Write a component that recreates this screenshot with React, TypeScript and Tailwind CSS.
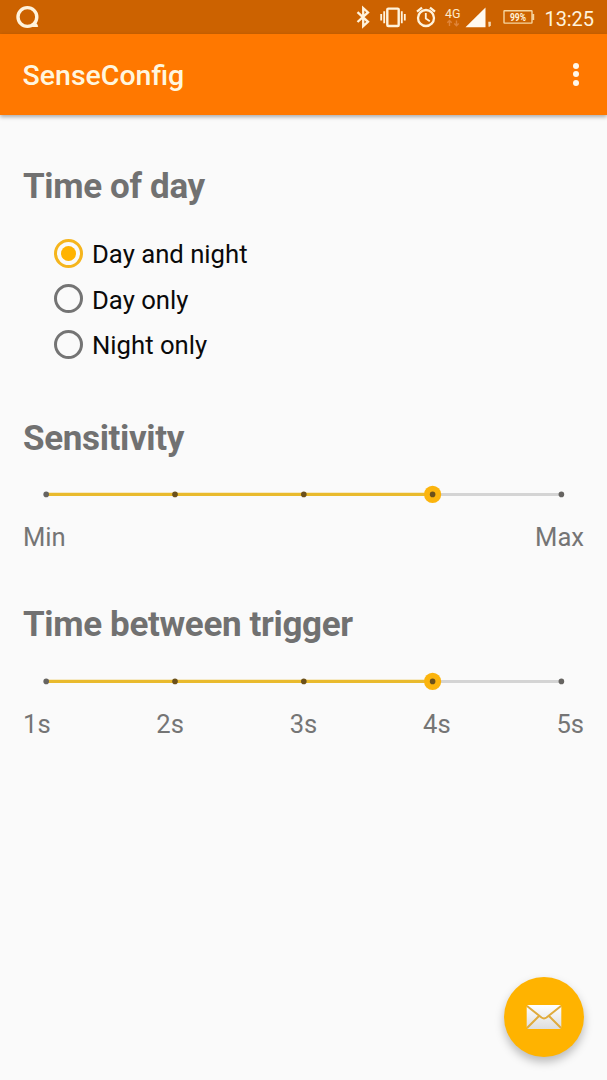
import React, { useState } from "react";

function StatusBar() {
  return (
    <div className="flex h-[34px] shrink-0 items-center bg-[#cc6200] text-[#fff3dc]">
      <svg className="ml-[15px] h-[24px] w-[25px]" viewBox="0 0 25 24" fill="none" stroke="currentColor">
        <circle cx="12.4" cy="12" r="9.4" strokeWidth="3.4" />
        <path d="M17.5 20.7h5" strokeWidth="2.6" />
        <path d="M20 17.5l2 3.4h-4z" fill="currentColor" strokeWidth="1.5" />
      </svg>
      <div className="flex-1" />
      <svg className="h-[34px] w-[195px] shrink-0" viewBox="350 0 195 34" fill="none" stroke="currentColor">
        <path d="M357.5 12.2l10.5 9.6-4.8 4.4V8l4.8 4.4-10.5 9.6" strokeWidth="2.3" />
        <rect x="387.3" y="8.6" width="11.4" height="17.4" rx="1" strokeWidth="2.4" />
        <path d="M384.2 11.2v12M381.2 14v6.5M401.8 11.2v12M404.8 14v6.5" strokeWidth="1.8" />
        <circle cx="426" cy="18" r="8" strokeWidth="2.3" />
        <path d="M425.8 13v5.5l4 2.8" strokeWidth="1.8" />
        <path d="M417 11.7l5-4.1M435 11.7l-5-4.1" strokeWidth="2.2" />
        <text x="445" y="18.2" fontSize="12" textLength="15.5" lengthAdjust="spacingAndGlyphs" fontFamily="Roboto, sans-serif" fill="#fdeacb" stroke="none">4G</text>
        <path d="M449.5 26v-5M447.3 22.8l2.2-2.2 2.2 2.2M456.5 20.5v5M454.3 23.5l2.2 2.2 2.2-2.2" stroke="#df853a" strokeWidth="1.4" />
        <path d="M465.5 27.2L485.5 7.5v19.7z" fill="#fffaf0" stroke="none" />
        <path d="M488.3 21.8h2.5v3.5l-1.2 1.5h-1.1z" fill="#f5d9b2" stroke="none" />
        <rect x="504" y="10.7" width="28" height="12.4" rx=".5" stroke="#f6d59f" strokeWidth="1.4" />
        <path d="M533.2 14v6" stroke="#f6d59f" strokeWidth="2" />
        <text x="518" y="20.7" textAnchor="middle" fontSize="10" fontWeight="700" textLength="16" lengthAdjust="spacingAndGlyphs" fontFamily="Roboto, sans-serif" stroke="none" fill="currentColor">99%</text>
      </svg>
      <span className="mr-[12.5px] w-[50px] whitespace-nowrap pt-[3px] text-[20px] leading-[24px] tracking-[-0.1px]">13:25</span>
    </div>
  );
}

function Toolbar() {
  return (
    <header className="z-10 flex h-[80.5px] shrink-0 items-center justify-between bg-[#ff7800] pl-[22.5px] shadow-[0_2px_4px_rgba(0,0,0,0.32)]">
      <h1 className="pt-[3px] text-[28.5px] font-medium leading-[32px] text-[#fff6df]">SenseConfig</h1>
      <button className="mr-[28px] flex flex-col items-center gap-[2.5px]" aria-label="More options">
        <span className="size-[6px] rounded-full bg-[#fff8ea]" />
        <span className="size-[6px] rounded-full bg-[#fff8ea]" />
        <span className="size-[6px] rounded-full bg-[#fff8ea]" />
      </button>
    </header>
  );
}

function Heading({ children }: { children: React.ReactNode }) {
  return <h2 className="text-[35px] font-bold leading-[40px] tracking-[-0.35px] text-[#717171]">{children}</h2>;
}

function Radio({ label, checked, onSelect }: { label: string; checked: boolean; onSelect: () => void }) {
  return (
    <button className="flex h-[45.5px] items-center gap-[9px] text-left" role="radio" aria-checked={checked} onClick={onSelect}>
      <span className={checked ? "flex size-[29px] items-center justify-center rounded-full border-[3px] border-[#f5b51d]" : "flex size-[29px] items-center justify-center rounded-full border-[3px] border-[#747474]"}>
        {checked && <span className="size-[15px] rounded-full bg-[#ffb300]" />}
      </span>
      <span className="pt-[2px] text-[25.7px] leading-[30px] text-[#0a0a0a]">{label}</span>
    </button>
  );
}

function Slider({ value, onChange }: { value: number; onChange: (v: number) => void }) {
  return (
    <svg className="block h-[20px] w-[560px]" viewBox="0 0 560 20">
      <path d="M23.2 10.4h515.2" stroke="#d4d4d4" strokeWidth="3" />
      <path d={`M23.2 10.4h${value * 128.8}`} stroke="#e9ba2d" strokeWidth="3.4" />
      <circle cx={23.2 + value * 128.8} cy="10.4" r="8.6" fill="#fbb40d" />
      {[0, 1, 2, 3, 4].map((i) => (
        <circle
          key={i}
          cx={23.2 + i * 128.8}
          cy="10.4"
          r="2.8"
          fill={i === 0 || i > value ? "#666461" : "#6b501b"}
          onClick={() => onChange(i)}
        />
      ))}
    </svg>
  );
}

function Labels({ items }: { items: string[] }) {
  return (
    <div className="flex justify-between text-[25.6px] leading-[30px] text-[#757575]">
      {items.map((t) => (
        <span key={t}>{t}</span>
      ))}
    </div>
  );
}

export default function App() {
  const [time, setTime] = useState("Day and night");
  const [sensitivity, setSensitivity] = useState(3);
  const [interval, setIntervalStep] = useState(3);
  return (
    <div className="flex h-[1080px] w-[607px] flex-col overflow-hidden bg-[#fafafa] font-['Roboto',sans-serif]">
      <StatusBar />
      <Toolbar />
      <main className="flex flex-1 flex-col pl-[23px] pr-[23px] pt-[52.3px]">
        <Heading>Time of day</Heading>
        <div className="mt-[23.5px] flex flex-col pl-[31px]" role="radiogroup">
          {["Day and night", "Day only", "Night only"].map((t) => (
            <Radio key={t} label={t} checked={t === time} onSelect={() => setTime(t)} />
          ))}
        </div>
        <div className="mt-[51.9px]">
          <Heading>Sensitivity</Heading>
          <div className="mt-[25.8px]">
            <Slider value={sensitivity} onChange={setSensitivity} />
          </div>
          <div className="mt-[17.5px]">
            <Labels items={["Min", "Max"]} />
          </div>
        </div>
        <div className="mt-[53px]">
          <Heading>Time between trigger</Heading>
          <div className="mt-[26px]">
            <Slider value={interval} onChange={setIntervalStep} />
          </div>
          <div className="mt-[18px]">
            <Labels items={["1s", "2s", "3s", "4s", "5s"]} />
          </div>
        </div>
        <button
          className="mb-[23.5px] mt-auto flex size-[80px] items-center justify-center self-end rounded-full bg-[#ffb300] shadow-[0_5px_10px_rgba(0,0,0,0.26)]"
          aria-label="Send by mail"
        >
          <svg className="h-[26px] w-[36px]" viewBox="0 0 36 26">
            <defs>
              <linearGradient id="paper" x1="0" y1="0" x2="0" y2="1">
                <stop offset="0" stopColor="#ffffff" />
                <stop offset="1" stopColor="#dedede" />
              </linearGradient>
            </defs>
            <rect x=".7" y="1" width="34.6" height="24" rx="2" fill="url(#paper)" />
            <path d="M1 2l14.5 11.5q2.5 1.8 5 0L35 2M1 24l12-12M35 24L23 12" fill="none" stroke="#e0ab3c" strokeWidth="2" />
          </svg>
        </button>
      </main>
    </div>
  );
}
